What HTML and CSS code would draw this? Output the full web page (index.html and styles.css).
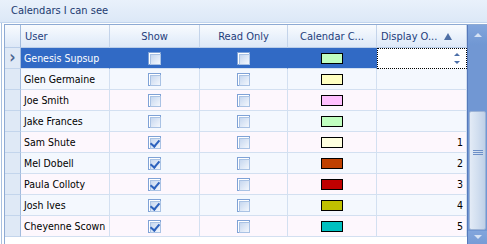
FILE: index.html
```html
<!DOCTYPE html>
<html lang="en">
<head>
  <meta charset="UTF-8">
  <title>Calendars I can see</title>
  <link rel="stylesheet" href="styles.css">
</head>
<body>
  <div class="title">Calendars I can see</div>
  <div class="panel">
    <div class="grid">
      <div class="rows">
        <div class="row head">
          <div class="cell corner"></div>
          <div class="cell left">User</div>
          <div class="cell">Show</div>
          <div class="cell">Read Only</div>
          <div class="cell">Calendar C...</div>
          <div class="cell left sorted">Display O... <span class="sort"></span></div>
        </div>

        <div class="row selected">
          <div class="cell rowhead"><span class="chev">&#x203A;</span></div>
          <div class="cell left">Genesis Supsup</div>
          <div class="cell"><span class="check"></span></div>
          <div class="cell"><span class="check"></span></div>
          <div class="cell"><span class="swatch" style="background:#c0ffc0"></span></div>
          <div class="cell edit"><span class="spin"><i class="up"></i><i class="down"></i></span></div>
        </div>
        <div class="row even">
          <div class="cell rowhead"></div>
          <div class="cell left">Glen Germaine</div>
          <div class="cell"><span class="check"></span></div>
          <div class="cell"><span class="check"></span></div>
          <div class="cell"><span class="swatch" style="background:#ffffc0"></span></div>
          <div class="cell num"></div>
        </div>
        <div class="row odd">
          <div class="cell rowhead"></div>
          <div class="cell left">Joe Smith</div>
          <div class="cell"><span class="check"></span></div>
          <div class="cell"><span class="check"></span></div>
          <div class="cell"><span class="swatch" style="background:#ffc0ff"></span></div>
          <div class="cell num"></div>
        </div>
        <div class="row even">
          <div class="cell rowhead"></div>
          <div class="cell left">Jake Frances</div>
          <div class="cell"><span class="check"></span></div>
          <div class="cell"><span class="check"></span></div>
          <div class="cell"><span class="swatch" style="background:#c0ffc0"></span></div>
          <div class="cell num"></div>
        </div>
        <div class="row odd">
          <div class="cell rowhead"></div>
          <div class="cell left">Sam Shute</div>
          <div class="cell"><span class="check on"></span></div>
          <div class="cell"><span class="check"></span></div>
          <div class="cell"><span class="swatch" style="background:#ffffe0"></span></div>
          <div class="cell num">1</div>
        </div>
        <div class="row even">
          <div class="cell rowhead"></div>
          <div class="cell left">Mel Dobell</div>
          <div class="cell"><span class="check on"></span></div>
          <div class="cell"><span class="check"></span></div>
          <div class="cell"><span class="swatch" style="background:#c04000"></span></div>
          <div class="cell num">2</div>
        </div>
        <div class="row odd">
          <div class="cell rowhead"></div>
          <div class="cell left">Paula Colloty</div>
          <div class="cell"><span class="check on"></span></div>
          <div class="cell"><span class="check"></span></div>
          <div class="cell"><span class="swatch" style="background:#c00000"></span></div>
          <div class="cell num">3</div>
        </div>
        <div class="row even">
          <div class="cell rowhead"></div>
          <div class="cell left">Josh Ives</div>
          <div class="cell"><span class="check on"></span></div>
          <div class="cell"><span class="check"></span></div>
          <div class="cell"><span class="swatch" style="background:#c0c000"></span></div>
          <div class="cell num">4</div>
        </div>
        <div class="row odd">
          <div class="cell rowhead"></div>
          <div class="cell left">Cheyenne Scown</div>
          <div class="cell"><span class="check on"></span></div>
          <div class="cell"><span class="check"></span></div>
          <div class="cell"><span class="swatch" style="background:#00c0c0"></span></div>
          <div class="cell num">5</div>
        </div>
      </div>

      <div class="scrollbar">
        <div class="arrow"><span class="tri-up"></span></div>
        <div class="track"></div>
        <div class="thumb"><span class="grip"></span></div>
        <div class="arrow"><span class="tri-down"></span></div>
      </div>
    </div>
  </div>
</body>
</html>
```

FILE: styles.css
```css
* {
  box-sizing: border-box;
  margin: 0;
  padding: 0;
}

body {
  font-family: 'DejaVu Sans Condensed', 'DejaVu Sans', sans-serif;
  font-size: 10.5px;
  background: #ffffff;
  width: 487px;
  height: 244px;
  overflow: hidden;
}

.title {
  height: 23px;
  line-height: 22px;
  padding-left: 11px;
  color: #1c3a70;
  font-size: 11px;
  background: linear-gradient(#e9f1fb, #dce8f7);
  border-bottom: 1px solid #c2d5ee;
}

.panel {
  margin-left: 1px;
  border-left: 1px solid #a9c0df;
  padding: 1px 0 0 2px;
  height: 240px;
}

.grid {
  display: flex;
  border: 1px solid #8eaad3;
  border-right: none;
  height: 260px;
  background: #ffffff;
}

.rows {
  width: 462px;
}

.row {
  display: grid;
  grid-template-columns: 16px 89px 90px 88px 89px 90px;
  height: 21px;
}

.cell {
  border-right: 1px solid #d3e0f1;
  border-bottom: 1px solid #d3e0f1;
  display: flex;
  align-items: center;
  justify-content: center;
  white-space: nowrap;
  overflow: hidden;
  color: #000000;
}

.left {
  justify-content: flex-start;
  padding-left: 3px;
}

.num {
  justify-content: flex-end;
  padding-right: 3px;
}

.head {
  height: 23px;
  font-size: 11px;
}

.head .cell {
  background: linear-gradient(#f9fbfe, #e9f1fb 55%, #dde8f7);
  border-right: 1px solid #c4d4ea;
  border-bottom: 1px solid #b9cde8;
  color: #1e3d7b;
}

.head .left {
  padding-left: 4px;
}

.sorted {
  position: relative;
}

.sort {
  position: absolute;
  right: 14px;
  top: 8px;
  width: 0;
  height: 0;
  border-left: 4px solid transparent;
  border-right: 4px solid transparent;
  border-bottom: 7px solid #4d6ea4;
}

.rowhead {
  background: #dfe9f6;
  border-right: 1px solid #a2bbdd;
  border-bottom: 1px solid #c3d5ec;
}

.head .corner {
  border-right: 1px solid #a2bbdd;
}

.even .cell:not(.rowhead) {
  background: #f4f8fe;
}

.odd .cell:not(.rowhead) {
  background: #fdf7fd;
}

.selected .cell:not(.rowhead) {
  background: #316ac5;
  color: #ffffff;
  border-right-color: #316ac5;
  border-bottom-color: #d3e0f1;
}

.selected .cell.edit {
  background: #ffffff;
  border: 1px dotted #000000;
  justify-content: flex-end;
  padding-right: 6px;
}

.chev {
  color: #4a6592;
  font-size: 17px;
  font-weight: bold;
  line-height: 16px;
  margin-top: -2px;
}

.spin {
  display: flex;
  flex-direction: column;
  gap: 5px;
}

.spin i {
  display: block;
  width: 0;
  height: 0;
  border-left: 3px solid transparent;
  border-right: 3px solid transparent;
}

.spin .up {
  border-bottom: 3px solid #4c6fa8;
}

.spin .down {
  border-top: 3px solid #4c6fa8;
}

.check {
  display: block;
  width: 13px;
  height: 13px;
  border: 1px solid #7fa2d6;
  background: #ffffff;
  padding: 1px;
  position: relative;
}

.check::before {
  content: "";
  display: block;
  width: 9px;
  height: 9px;
  border: 1px solid #a9c2e4;
  background: linear-gradient(135deg, #c6d7ef, #f3f7fd);
}

.check.on::after {
  content: "";
  position: absolute;
  left: 2px;
  top: 0px;
  width: 4px;
  height: 7px;
  border-right: 2px solid #2d62bd;
  border-bottom: 2px solid #2d62bd;
  transform: translate(1px, 1px) rotate(40deg);
}

.swatch {
  display: block;
  width: 22px;
  height: 11px;
  border: 1px solid #000000;
}

.scrollbar {
  width: 20px;
  height: 258px;
  background: #7197d3;
  border-left: 1px solid #5679bb;
  display: flex;
  flex-direction: column;
}

.arrow {
  height: 20px;
  display: flex;
  align-items: center;
  justify-content: center;
  background: linear-gradient(#82a5dc, #7097d3);
}

.tri-up {
  width: 0;
  height: 0;
  border-left: 4px solid transparent;
  border-right: 4px solid transparent;
  border-bottom: 4px solid #d6e2f4;
}

.tri-down {
  width: 0;
  height: 0;
  border-left: 4px solid transparent;
  border-right: 4px solid transparent;
  border-top: 4px solid #d6e2f4;
  margin-bottom: 8px;
}

.track {
  height: 66px;
}

.thumb {
  height: 119px;
  margin: 0 1px 1px;
  border: 1px solid #9cb3d6;
  border-radius: 2px;
  background: linear-gradient(90deg, #e3ebf6, #d2dff0 50%, #bfd0e7);
  display: flex;
  align-items: center;
  justify-content: center;
}

.grip {
  width: 10px;
  height: 6px;
  margin-top: -36px;
  background: repeating-linear-gradient(#6d8fc7 0 1px, transparent 1px 2px);
}
```
